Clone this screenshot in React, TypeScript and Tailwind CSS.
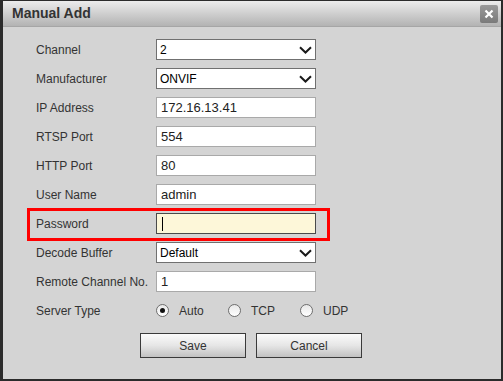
import React from 'react';

const font = { fontFamily: '"Liberation Sans", Arial, sans-serif' };

const Chevron = () => (
  <svg className="w-[13px] h-[8px]" viewBox="0 0 13 8" fill="none">
    <path d="M1 1.2L6.5 6.5L12 1.2" stroke="#1a1a1a" strokeWidth={2} />
  </svg>
);

const Row = ({ label, children }: { label: string; children: React.ReactNode }) => (
  <div className="flex items-center h-[29px]">
    <div className="w-[120px] shrink-0 text-[12px] text-[#333]">{label}</div>
    {children}
  </div>
);

const SelectBox = ({ value }: { value: string }) => (
  <div className="relative w-[160px] h-[21px] bg-white border border-[#707070] flex items-center pl-[3px] text-[12px] text-black">
    {value}
    <span className="absolute right-[3px] top-[6px]">
      <Chevron />
    </span>
  </div>
);

const TextBox = ({ value }: { value: string }) => (
  <div className="w-[160px] h-[21px] bg-white border border-[#a9a9a9] flex items-center pl-[4px] text-[13px] text-[#222]">
    {value}
  </div>
);

const Radio = ({ label, checked }: { label: string; checked?: boolean }) => (
  <div className="flex items-center w-[72px]">
    <span className="w-[13px] h-[13px] rounded-full border border-[#6e6e6e] bg-gradient-to-b from-[#e8e8e8] to-white flex items-center justify-center">
      {checked && <span className="w-[5px] h-[5px] rounded-full bg-[#111]" />}
    </span>
    <span className="ml-[10px] text-[12px] text-[#333]">{label}</span>
  </div>
);

const Button = ({ label }: { label: string }) => (
  <button className="w-[106px] h-[25px] border border-[#3a3a3a] bg-gradient-to-b from-[#fbfbfb] via-[#e6e6e6] to-[#c2c2c2] text-[12px] text-[#333]">
    {label}
  </button>
);

export default function App() {
  return (
    <div className="w-[503px] h-[381px] bg-[#2b2b2b] pl-[3px] pt-[1px] pr-[2px] pb-[2px]" style={font}>
      <div className="w-full h-full bg-[#d4d4d4] flex flex-col">
        {/* Title bar */}
        <div className="h-[26px] shrink-0 flex items-center justify-between pl-[9px] pr-[3px] bg-gradient-to-b from-[#ececec] to-[#b3b3b3] border-b border-[#a6a6a6]">
          <span className="text-[14px] font-bold text-[#333]">Manual Add</span>
          <span className="w-[18px] h-[18px] rounded-[2px] bg-gradient-to-b from-[#9a9a9a] to-[#7a7a7a] flex items-center justify-center">
            <svg className="w-[10px] h-[10px]" viewBox="0 0 10 10">
              <path d="M1.5 1.5L8.5 8.5M8.5 1.5L1.5 8.5" stroke="#fff" strokeWidth={2.2} />
            </svg>
          </span>
        </div>

        {/* Form */}
        <div className="pt-[8px] pl-[33px]">
          <Row label="Channel"><SelectBox value="2" /></Row>
          <Row label="Manufacturer"><SelectBox value="ONVIF" /></Row>
          <Row label="IP Address"><TextBox value="172.16.13.41" /></Row>
          <Row label="RTSP Port"><TextBox value="554" /></Row>
          <Row label="HTTP Port"><TextBox value="80" /></Row>
          <Row label="User Name"><TextBox value="admin" /></Row>
          <div className="relative">
            <Row label="Password">
              <div className="w-[160px] h-[21px] bg-[#fdf7d9] border border-[#4a4a4a] flex items-center pl-[5px]">
                <span className="w-[1px] h-[14px] bg-black" />
              </div>
            </Row>
            <div className="absolute left-[-9px] top-[-1px] w-[303px] h-[33px] border-[3px] border-[#ff0000]" />
          </div>
          <Row label="Decode Buffer"><SelectBox value="Default" /></Row>
          <Row label="Remote Channel No."><TextBox value="1" /></Row>
          <Row label="Server Type">
            <div className="flex items-center">
              <Radio label="Auto" checked />
              <Radio label="TCP" />
              <Radio label="UDP" />
            </div>
          </Row>
          <div className="flex gap-[10px] pl-[104px] mt-[8px]">
            <Button label="Save" />
            <Button label="Cancel" />
          </div>
        </div>
      </div>
    </div>
  );
}
